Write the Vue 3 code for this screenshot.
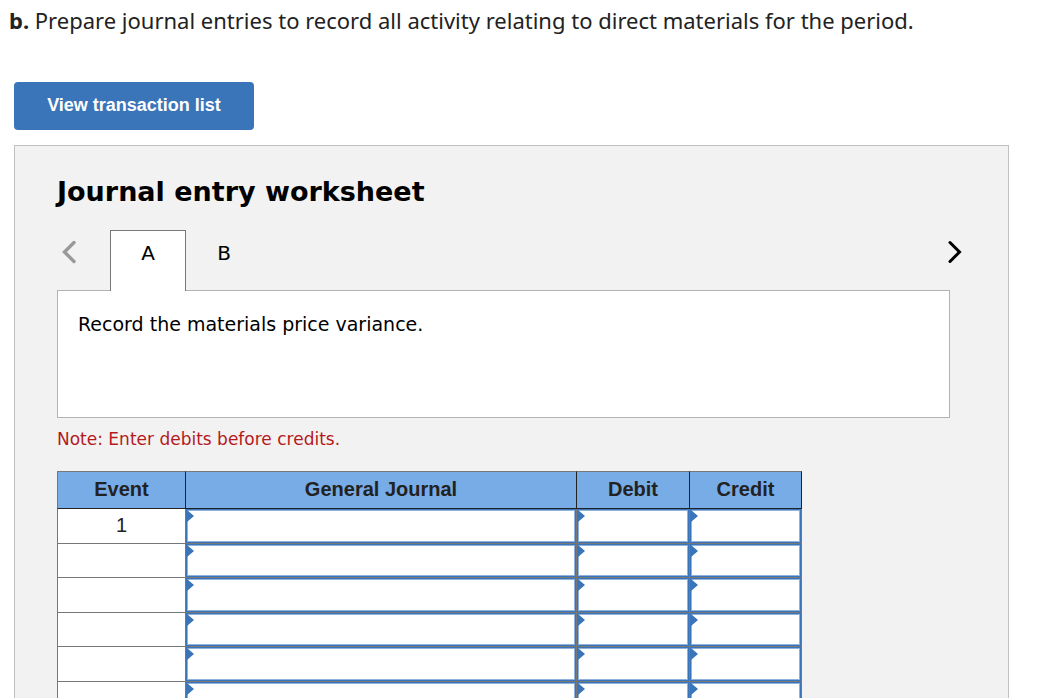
<script setup>
import { ref } from 'vue'

const tabs = [
  { id: 'A', text: 'Record the materials price variance.' },
  { id: 'B', text: '' }
]
const active = ref(0)

const rows = ref(
  Array.from({ length: 8 }, (_, i) => ({
    event: i === 0 ? '1' : '',
    journal: '',
    debit: '',
    credit: ''
  }))
)
const fields = [
  { key: 'journal', label: 'General Journal' },
  { key: 'debit', label: 'Debit' },
  { key: 'credit', label: 'Credit' }
]

function step(delta) {
  active.value = Math.min(tabs.length - 1, Math.max(0, active.value + delta))
}
</script>

<template>
  <main class="page">
    <p class="question"><b>b.</b> Prepare journal entries to record all activity relating to direct materials for the period.</p>

    <button type="button" class="view-list">View transaction list</button>

    <section class="worksheet">
      <h2 class="title">Journal entry worksheet</h2>

      <div class="nav">
        <button type="button" class="arrow" aria-label="Previous entry" :disabled="active === 0" @click="step(-1)">
          <svg viewBox="0 0 24 24" width="24" height="24" fill="none" stroke="currentColor" stroke-width="3.4" stroke-linecap="round">
            <path d="M17 2.5 L7.5 12 L17 21.5" />
          </svg>
        </button>
        <div class="tabs" role="tablist">
          <button
            v-for="(tab, i) in tabs"
            :id="'tab-' + tab.id"
            :key="tab.id"
            type="button"
            role="tab"
            class="tab"
            :class="{ active: i === active }"
            :aria-selected="i === active"
            aria-controls="entry"
            @click="active = i"
          >{{ tab.id }}</button>
        </div>
        <button type="button" class="arrow next" aria-label="Next entry" :disabled="active === tabs.length - 1" @click="step(1)">
          <svg viewBox="0 0 24 24" width="24" height="24" fill="none" stroke="currentColor" stroke-width="3" stroke-linecap="round">
            <path d="M12 2.5 L21.5 12 L12 21.5" />
          </svg>
        </button>
      </div>

      <div id="entry" class="entry" role="tabpanel" :aria-labelledby="'tab-' + tabs[active].id">{{ tabs[active].text }}</div>

      <p class="note">Note: Enter debits before credits.</p>

      <table class="journal">
        <colgroup>
          <col class="col-event" />
          <col />
          <col class="col-debit" />
          <col class="col-credit" />
        </colgroup>
        <thead>
          <tr>
            <th scope="col">Event</th>
            <th scope="col">General Journal</th>
            <th scope="col">Debit</th>
            <th scope="col">Credit</th>
          </tr>
        </thead>
        <tbody>
          <tr v-for="(row, i) in rows" :key="i">
            <td class="event">{{ row.event }}</td>
            <td v-for="field in fields" :key="field.key" class="field">
              <input v-model="row[field.key]" type="text" :aria-label="field.label + ', line ' + (i + 1)" />
            </td>
          </tr>
        </tbody>
      </table>
    </section>
  </main>
</template>

<style>
body {
  margin: 0;
  background: #fff;
}
</style>

<style scoped>
.page {
  box-sizing: border-box;
  display: flex;
  flex-direction: column;
  align-items: flex-start;
  height: 100vh;
  padding: 4px 33px 2px 14px;
  overflow: hidden;
  font-family: "DejaVu Sans", sans-serif;
  color: #222;
}
.question {
  margin: 0 0 46px -5px;
  font: 22px/32px "Noto Sans", sans-serif;
}
.view-list {
  flex: none;
  width: 240px;
  height: 48px;
  margin-bottom: 15px;
  padding: 0 0 2px;
  border: 0;
  border-radius: 4px;
  background: #3a75ba;
  color: #fff;
  font: bold 18px "Liberation Sans", sans-serif;
}
.worksheet {
  box-sizing: border-box;
  flex: 1;
  align-self: stretch;
  min-height: 0;
  padding: 28px 58px 0 42px;
  border: 1px solid #c1c1c1;
  border-bottom: 0;
  overflow: hidden;
  background: #f2f2f2;
}
.title {
  margin: 0 0 20px;
  font-size: 27px;
  line-height: 36px;
  color: #000;
}
.nav {
  display: flex;
  align-items: flex-start;
  margin-right: -12px;
}
.arrow {
  display: flex;
  align-items: center;
  width: 53px;
  height: 44px;
  padding: 0;
  border: 0;
  background: none;
  color: #000;
}
.arrow:disabled {
  color: #999;
}
.next {
  justify-content: flex-end;
}
.tabs {
  display: flex;
  flex: 1;
}
.tab {
  width: 76px;
  height: 60px;
  padding: 0 0 16px;
  border: 1px solid transparent;
  border-bottom: 0;
  background: none;
  color: #000;
  font: 20px "DejaVu Sans", sans-serif;
}
.tab.active {
  position: relative;
  height: 61px;
  margin-bottom: -1px;
  padding-bottom: 17px;
  border-color: #777;
  background: #fff;
}
.entry {
  box-sizing: border-box;
  min-height: 128px;
  padding: 20px;
  border: 1px solid #b3b3b3;
  background: #fff;
  color: #000;
  font-size: 19px;
  line-height: 26px;
}
.note {
  margin: 10px 0 20px;
  font-size: 17px;
  line-height: 23px;
  color: #b5191d;
}
.journal {
  width: calc(100% - 148px);
  table-layout: fixed;
  border-collapse: separate;
  border-spacing: 0;
  background: #fff;
  font: 20px "Liberation Sans", sans-serif;
}
.col-event {
  width: 129px;
}
.col-debit {
  width: 113px;
}
.col-credit {
  width: 112px;
}
th,
td {
  box-sizing: border-box;
  padding: 0;
  border: 0 solid #777;
  border-width: 0 1px 1px 0;
  text-align: center;
}
th {
  height: 38px;
  padding-bottom: 2px;
  border-color: #777 #222 #222 #777;
  border-top-width: 1px;
  background: #78ace6;
}
th:first-child,
td:first-child {
  border-left-width: 1px;
}
td {
  height: 35px;
}
.event {
  padding-bottom: 2px;
}
.field {
  position: relative;
}
.field::before {
  content: "";
  position: absolute;
  top: 1px;
  left: 0;
  width: 8px;
  height: 12px;
  background: #3a75ba;
  clip-path: polygon(0 0, 1px 0, 100% 50%, 1px 100%, 0 100%);
}
.field input {
  box-sizing: border-box;
  display: block;
  width: 100%;
  height: 34px;
  padding: 0 10px;
  border: 1px solid #3a75ba;
  border-radius: 0;
  outline: 0;
  background: #fff;
  box-shadow: inset 0 0 0 1px #8fb2dc;
  font: inherit;
}
tr:nth-child(even) td {
  height: 34px;
}
tr:nth-child(even) input {
  height: 33px;
}
</style>
